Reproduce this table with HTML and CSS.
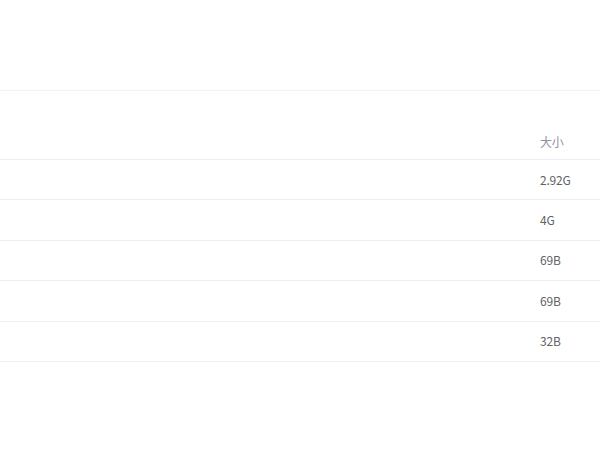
FILE: index.html
```html
<!DOCTYPE html>
<html>
<head>
<meta charset="utf-8">
<link rel="stylesheet" href="styles.css">
</head>
<body>
<div class="page">
  <div class="topbar"></div>
  <div class="table">
    <div class="row head"><div class="cell">大小</div></div>
    <div class="row"><div class="cell">2.92G</div></div>
    <div class="row"><div class="cell">4G</div></div>
    <div class="row"><div class="cell">69B</div></div>
    <div class="row"><div class="cell">69B</div></div>
    <div class="row"><div class="cell">32B</div></div>
  </div>
</div>
</body>
</html>
```
FILE: styles.css
```css
html, body { margin: 0; padding: 0; background: #fff; }
body { font-family: "Noto Sans CJK SC", "Noto Sans", sans-serif; font-size: 12px; color: #606266; }
.page { width: 600px; }
.topbar { height: 91px; border-bottom: 1px solid #f2f2f2; box-sizing: border-box; }
.table { padding-top: 28px; }
.row { display: flex; align-items: center; height: 40.4px; border-bottom: 1px solid #ebeef5; box-sizing: border-box; }
.row.head { height: 41px; padding-top: 6px; color: #909399; }
.cell { padding-left: 540px; line-height: 20px; letter-spacing: -0.2px; }
```
